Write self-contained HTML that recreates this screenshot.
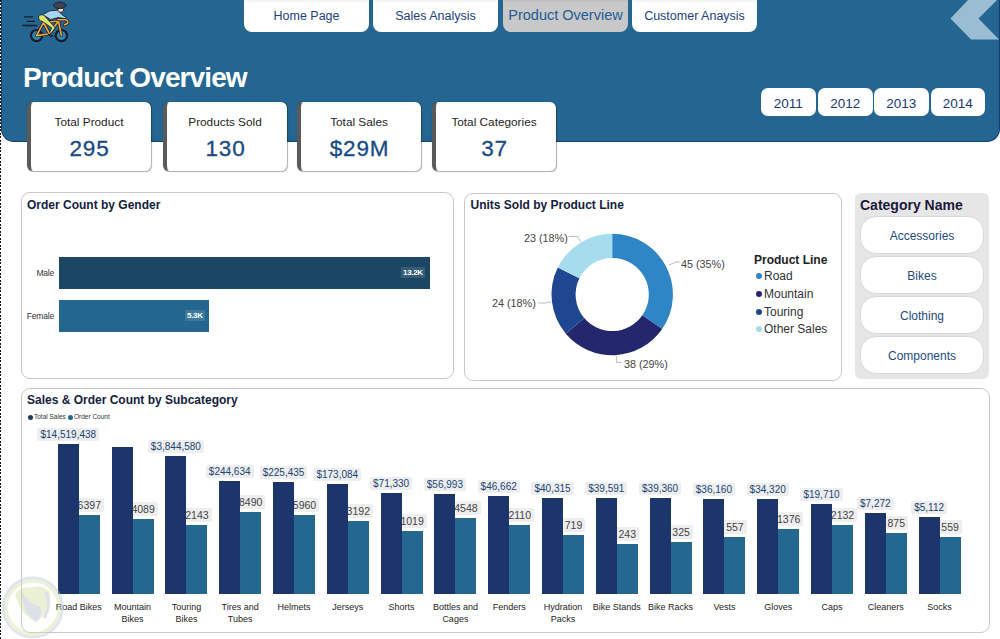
<!DOCTYPE html><html><head><meta charset="utf-8"><style>
*{margin:0;padding:0;box-sizing:border-box}
html,body{width:1000px;height:639px;overflow:hidden;background:#fff;font-family:"Liberation Sans", sans-serif}
.a{position:absolute}
.t{position:absolute;white-space:nowrap;line-height:1}
</style></head><body>
<div class="a" style="left:2px;top:-20px;width:997px;height:161px;background:#246691;border-radius:0 0 12px 12px;box-shadow:0 0 0 1px #153e70"></div>
<div class="a" style="left:244px;top:-10px;width:125px;height:42px;background:#fff;border-radius:8px;font-size:12.5px;color:#1c417e;display:flex;align-items:flex-end;justify-content:center;padding-bottom:10px;line-height:1">Home Page</div>
<div class="a" style="left:245px;top:0;width:123px;height:1.5px;background:rgba(0,0,0,.04)"></div>
<div class="a" style="left:373px;top:-10px;width:125px;height:42px;background:#fff;border-radius:8px;font-size:12.5px;color:#1c417e;display:flex;align-items:flex-end;justify-content:center;padding-bottom:10px;line-height:1">Sales Analysis</div>
<div class="a" style="left:374px;top:0;width:123px;height:1.5px;background:rgba(0,0,0,.04)"></div>
<div class="a" style="left:503px;top:-10px;width:125px;height:42px;background:#c8c8c8;border-radius:8px;font-size:14.5px;color:#235c96;display:flex;align-items:flex-end;justify-content:center;padding-bottom:10px;line-height:1">Product Overview</div>
<div class="a" style="left:504px;top:0;width:123px;height:1.5px;background:rgba(0,0,0,.04)"></div>
<div class="a" style="left:632px;top:-10px;width:125px;height:42px;background:#fff;border-radius:8px;font-size:12.5px;color:#1c417e;display:flex;align-items:flex-end;justify-content:center;padding-bottom:10px;line-height:1">Customer Anaysis</div>
<div class="a" style="left:633px;top:0;width:123px;height:1.5px;background:rgba(0,0,0,.04)"></div>
<svg class="a" style="left:18px;top:0" width="60" height="48" viewBox="0 0 60 48">
<g stroke="#1b1b26" stroke-linecap="round" stroke-linejoin="round">
<path d="M6.4,16.9H14.6M9.4,21.4H16.1M4.9,25.5H18.8" stroke-width="1.3" fill="none"/>
<circle cx="18.6" cy="35.6" r="5.6" fill="#2a86b8" stroke-width="2.2"/>
<circle cx="43.4" cy="35.6" r="5.6" fill="#2a86b8" stroke-width="2.2"/>
<path d="M18.6,35.6L25.5,22.5L40.5,21L43.4,35.6M25.5,22.5L31.5,33.8L40.5,21M18.6,35.6L31.5,33.8" fill="none" stroke="#1b1b26" stroke-width="3"/>
<path d="M18.6,35.6L25.5,22.5L40.5,21L43.4,35.6M25.5,22.5L31.5,33.8L40.5,21M18.6,35.6L31.5,33.8" fill="none" stroke="#f2a93b" stroke-width="1.6"/>
<path d="M40,19.8H47.5Q50.5,20.3 49.5,23.5L46.5,24.8" fill="none" stroke="#1b1b26" stroke-width="3"/>
<path d="M40,19.8H47.5Q50.5,20.3 49.5,23.5L46.5,24.8" fill="none" stroke="#f2a93b" stroke-width="1.6"/>
<path d="M25,14.5L32,10.8L40,10.2L44,14.8L48,17.2L47.5,18.6L40,17.6L33,19.5Z" fill="#a8d6f2" stroke-width="0.8"/>
<path d="M20.5,16.5Q21.5,14.2 25.5,14.8L37.2,27.8L33,33.5L31.6,32.5L33.6,27.8L24.5,21.5Q20,20.5 20.5,16.5Z" fill="#dce56a" stroke-width="0.8"/>
<path d="M30,34L33,37L35,36Z" fill="#3d4350" stroke-width="0.8"/>
<ellipse cx="42.8" cy="10" rx="3" ry="2.2" fill="#f4e6de" stroke-width="0.8"/>
<ellipse cx="41.8" cy="5.4" rx="6.2" ry="3.2" fill="#3d4350" stroke-width="0.8"/>
</g></svg>
<svg class="a" style="left:940px;top:0" width="60" height="42" viewBox="0 0 60 42"><polygon points="28,0 57,0 38.5,18.5 59,39.5 31,39.5 10.5,18.5" fill="#9bbdd3"/></svg>
<div class="t" style="left:23px;top:64px;font-size:28px;font-weight:bold;color:#fff;letter-spacing:-0.9px">Product Overview</div>
<div class="a" style="left:761px;top:87.5px;width:54.5px;height:28px;background:#fff;border-radius:7px;font-size:13.5px;color:#1a3a75;display:flex;align-items:center;justify-content:center;padding-top:3px">2011</div>
<div class="a" style="left:818px;top:87.5px;width:54.5px;height:28px;background:#fff;border-radius:7px;font-size:13.5px;color:#1a3a75;display:flex;align-items:center;justify-content:center;padding-top:3px">2012</div>
<div class="a" style="left:874px;top:87.5px;width:54.5px;height:28px;background:#fff;border-radius:7px;font-size:13.5px;color:#1a3a75;display:flex;align-items:center;justify-content:center;padding-top:3px">2013</div>
<div class="a" style="left:930.5px;top:87.5px;width:54.5px;height:28px;background:#fff;border-radius:7px;font-size:13.5px;color:#1a3a75;display:flex;align-items:center;justify-content:center;padding-top:3px">2014</div>
<div class="a" style="left:27px;top:102px;width:124px;height:69px;background:#fff;border-radius:6px;border-left:4.5px solid #5a5a5a;box-shadow:0.5px 0.5px 1px rgba(0,0,0,.32)"><div class="t" style="left:-4px;right:0;top:15px;text-align:center;font-size:11.8px;color:#252423">Total Product</div><div class="t" style="left:-3px;right:0;top:36px;text-align:center;font-size:22.5px;letter-spacing:0.8px;color:#184a85;-webkit-text-stroke:0.3px #184a85">295</div></div>
<div class="a" style="left:163px;top:102px;width:124px;height:69px;background:#fff;border-radius:6px;border-left:4.5px solid #5a5a5a;box-shadow:0.5px 0.5px 1px rgba(0,0,0,.32)"><div class="t" style="left:-4px;right:0;top:15px;text-align:center;font-size:11.8px;color:#252423">Products Sold</div><div class="t" style="left:-3px;right:0;top:36px;text-align:center;font-size:22.5px;letter-spacing:0.8px;color:#184a85;-webkit-text-stroke:0.3px #184a85">130</div></div>
<div class="a" style="left:297px;top:102px;width:124px;height:69px;background:#fff;border-radius:6px;border-left:4.5px solid #5a5a5a;box-shadow:0.5px 0.5px 1px rgba(0,0,0,.32)"><div class="t" style="left:-4px;right:0;top:15px;text-align:center;font-size:11.8px;color:#252423">Total Sales</div><div class="t" style="left:-3px;right:0;top:36px;text-align:center;font-size:22.5px;letter-spacing:0.8px;color:#184a85;-webkit-text-stroke:0.3px #184a85">$29M</div></div>
<div class="a" style="left:432px;top:102px;width:124px;height:69px;background:#fff;border-radius:6px;border-left:4.5px solid #5a5a5a;box-shadow:0.5px 0.5px 1px rgba(0,0,0,.32)"><div class="t" style="left:-4px;right:0;top:15px;text-align:center;font-size:11.8px;color:#252423">Total Categories</div><div class="t" style="left:-3px;right:0;top:36px;text-align:center;font-size:22.5px;letter-spacing:0.8px;color:#184a85;-webkit-text-stroke:0.3px #184a85">37</div></div>
<div class="a" style="left:20.6px;top:192.3px;width:433.4px;height:187px;border:1px solid #c8c8c8;border-radius:9px;background:#fff"></div>
<div class="a" style="left:464px;top:193px;width:378px;height:187.8px;border:1px solid #c8c8c8;border-radius:9px;background:#fff"></div>
<div class="a" style="left:20.6px;top:388.3px;width:969.2px;height:244.6px;border:1px solid #c8c8c8;border-radius:9px;background:#fff"></div>
<div class="t" style="left:27px;top:198.5px;font-size:12px;font-weight:bold;color:#14213d">Order Count by Gender</div>
<div class="a" style="left:59px;top:257px;width:371px;height:32px;background:#1b4664"></div>
<div class="a" style="left:59px;top:300px;width:150px;height:32px;background:#236690"></div>
<div class="t" style="left:14px;width:40px;text-align:right;top:269px;font-size:8.5px;letter-spacing:-0.2px;color:#333">Male</div>
<div class="t" style="left:14px;width:40px;text-align:right;top:312px;font-size:8.5px;letter-spacing:-0.2px;color:#333">Female</div>
<div class="t" style="left:401px;top:267px;padding:2px 2px 1px;font-size:8px;font-weight:bold;letter-spacing:-0.3px;color:#fff;background:rgba(255,255,255,.12)">13.2K</div>
<div class="t" style="left:185px;top:310px;padding:2px 2px 1px;font-size:8px;font-weight:bold;letter-spacing:-0.3px;color:#fff;background:rgba(255,255,255,.12)">5.3K</div>
<div class="t" style="left:470.5px;top:198.8px;font-size:12px;font-weight:bold;color:#14213d">Units Sold by Product Line</div>
<svg class="a" style="left:0;top:0" width="1000" height="639"><path d="M612.20,233.80 A60.7,60.7 0 0 1 662.16,328.98 L642.32,315.29 A36.6,36.6 0 0 0 612.20,257.90 Z" fill="#2f86c6"/><path d="M662.16,328.98 A60.7,60.7 0 0 1 565.81,333.64 L584.23,318.10 A36.6,36.6 0 0 0 642.32,315.29 Z" fill="#25276e"/><path d="M565.81,333.64 A60.7,60.7 0 0 1 557.79,267.60 L579.39,278.28 A36.6,36.6 0 0 0 584.23,318.10 Z" fill="#1f4791"/><path d="M557.79,267.60 A60.7,60.7 0 0 1 612.20,233.80 L612.20,257.90 A36.6,36.6 0 0 0 579.39,278.28 Z" fill="#a5dcee"/><polyline points="669,265 676,262 680,262" fill="none" stroke="#bbb" stroke-width="1"/><polyline points="616.4,356 616.4,362.5 621.5,362.5" fill="none" stroke="#bbb" stroke-width="1"/><polyline points="551,302 545,303 538,303" fill="none" stroke="#bbb" stroke-width="1"/><polyline points="580.5,241.5 577.6,236.5 568.5,236.5" fill="none" stroke="#bbb" stroke-width="1"/></svg>
<div class="t" style="left:681px;top:258.5px;font-size:10.8px;color:#444">45 (35%)</div>
<div class="t" style="left:624px;top:358.5px;font-size:10.8px;color:#444">38 (29%)</div>
<div class="t" style="left:492px;top:298px;font-size:10.8px;color:#444">24 (18%)</div>
<div class="t" style="left:524px;top:233px;font-size:10.8px;color:#444">23 (18%)</div>
<div class="t" style="left:754px;top:254px;font-size:12px;font-weight:bold;color:#222">Product Line</div>
<div class="a" style="left:756px;top:273px;width:6px;height:6px;border-radius:50%;background:#2f86c6"></div>
<div class="t" style="left:764px;top:270px;font-size:12px;color:#333">Road</div>
<div class="a" style="left:756px;top:291px;width:6px;height:6px;border-radius:50%;background:#25276e"></div>
<div class="t" style="left:764px;top:288px;font-size:12px;color:#333">Mountain</div>
<div class="a" style="left:756px;top:309px;width:6px;height:6px;border-radius:50%;background:#1f4791"></div>
<div class="t" style="left:764px;top:306px;font-size:12px;color:#333">Touring</div>
<div class="a" style="left:756px;top:326px;width:6px;height:6px;border-radius:50%;background:#a5dcee"></div>
<div class="t" style="left:764px;top:323px;font-size:12px;color:#333">Other Sales</div>
<div class="a" style="left:855px;top:193px;width:134px;height:186px;background:#e6e6e6;border-radius:6px"></div>
<div class="t" style="left:860px;top:198px;font-size:14px;font-weight:bold;color:#1a1a3a">Category Name</div>
<div class="a" style="left:860px;top:216px;width:124px;height:37.5px;background:#fff;border:1px solid #d8d8d8;border-radius:16px;display:flex;align-items:center;justify-content:center;font-size:12px;color:#1c4a82;padding-top:2px">Accessories</div>
<div class="a" style="left:860px;top:256px;width:124px;height:37.5px;background:#fff;border:1px solid #d8d8d8;border-radius:16px;display:flex;align-items:center;justify-content:center;font-size:12px;color:#1c4a82;padding-top:2px">Bikes</div>
<div class="a" style="left:860px;top:296.2px;width:124px;height:37.5px;background:#fff;border:1px solid #d8d8d8;border-radius:16px;display:flex;align-items:center;justify-content:center;font-size:12px;color:#1c4a82;padding-top:2px">Clothing</div>
<div class="a" style="left:860px;top:336.2px;width:124px;height:37.5px;background:#fff;border:1px solid #d8d8d8;border-radius:16px;display:flex;align-items:center;justify-content:center;font-size:12px;color:#1c4a82;padding-top:2px">Components</div>
<div class="t" style="left:27px;top:394px;font-size:12px;font-weight:bold;color:#14213d">Sales &amp; Order Count by Subcategory</div>
<div class="a" style="left:28px;top:415px;width:5px;height:5px;border-radius:50%;background:#1c356a"></div>
<div class="t" style="left:34px;top:413.5px;font-size:6.5px;color:#333">Total Sales</div>
<div class="a" style="left:68px;top:415px;width:5px;height:5px;border-radius:50%;background:#246891"></div>
<div class="t" style="left:74px;top:413.5px;font-size:6.5px;color:#333">Order Count</div>
<div class="t" style="left:28.3px;width:80px;top:425.0px;text-align:center"><span style="background:#eee;padding:1px 3px;font-size:10px;color:#174577;border-radius:2px">$14,519,438</span></div>
<div class="t" style="left:59.3px;width:60px;top:495.7px;text-align:center"><span style="background:#eee;padding:1px 3px;font-size:10.5px;color:#444;border-radius:2px">6397</span></div>
<div class="t" style="left:113.1px;width:60px;top:499.6px;text-align:center"><span style="background:#eee;padding:1px 3px;font-size:10.5px;color:#444;border-radius:2px">4089</span></div>
<div class="t" style="left:135.9px;width:80px;top:436.8px;text-align:center"><span style="background:#eee;padding:1px 3px;font-size:10px;color:#174577;border-radius:2px">$3,844,580</span></div>
<div class="t" style="left:166.9px;width:60px;top:505.7px;text-align:center"><span style="background:#eee;padding:1px 3px;font-size:10.5px;color:#444;border-radius:2px">2143</span></div>
<div class="t" style="left:189.7px;width:80px;top:462.3px;text-align:center"><span style="background:#eee;padding:1px 3px;font-size:10px;color:#174577;border-radius:2px">$244,634</span></div>
<div class="t" style="left:220.7px;width:60px;top:492.7px;text-align:center"><span style="background:#eee;padding:1px 3px;font-size:10.5px;color:#444;border-radius:2px">8490</span></div>
<div class="t" style="left:243.5px;width:80px;top:463.0px;text-align:center"><span style="background:#eee;padding:1px 3px;font-size:10px;color:#174577;border-radius:2px">$225,435</span></div>
<div class="t" style="left:274.5px;width:60px;top:496.0px;text-align:center"><span style="background:#eee;padding:1px 3px;font-size:10.5px;color:#444;border-radius:2px">5960</span></div>
<div class="t" style="left:297.3px;width:80px;top:465.3px;text-align:center"><span style="background:#eee;padding:1px 3px;font-size:10px;color:#174577;border-radius:2px">$173,084</span></div>
<div class="t" style="left:328.3px;width:60px;top:502.0px;text-align:center"><span style="background:#eee;padding:1px 3px;font-size:10.5px;color:#444;border-radius:2px">3192</span></div>
<div class="t" style="left:351.1px;width:80px;top:473.7px;text-align:center"><span style="background:#eee;padding:1px 3px;font-size:10px;color:#174577;border-radius:2px">$71,330</span></div>
<div class="t" style="left:382.1px;width:60px;top:512.0px;text-align:center"><span style="background:#eee;padding:1px 3px;font-size:10.5px;color:#444;border-radius:2px">1019</span></div>
<div class="t" style="left:404.9px;width:80px;top:475.4px;text-align:center"><span style="background:#eee;padding:1px 3px;font-size:10px;color:#174577;border-radius:2px">$56,993</span></div>
<div class="t" style="left:435.9px;width:60px;top:498.5px;text-align:center"><span style="background:#eee;padding:1px 3px;font-size:10.5px;color:#444;border-radius:2px">4548</span></div>
<div class="t" style="left:458.7px;width:80px;top:477.0px;text-align:center"><span style="background:#eee;padding:1px 3px;font-size:10px;color:#174577;border-radius:2px">$46,662</span></div>
<div class="t" style="left:489.7px;width:60px;top:505.7px;text-align:center"><span style="background:#eee;padding:1px 3px;font-size:10.5px;color:#444;border-radius:2px">2110</span></div>
<div class="t" style="left:512.5px;width:80px;top:478.8px;text-align:center"><span style="background:#eee;padding:1px 3px;font-size:10px;color:#174577;border-radius:2px">$40,315</span></div>
<div class="t" style="left:543.5px;width:60px;top:515.5px;text-align:center"><span style="background:#eee;padding:1px 3px;font-size:10.5px;color:#444;border-radius:2px">719</span></div>
<div class="t" style="left:566.3px;width:80px;top:478.8px;text-align:center"><span style="background:#eee;padding:1px 3px;font-size:10px;color:#174577;border-radius:2px">$39,591</span></div>
<div class="t" style="left:597.3px;width:60px;top:525.4px;text-align:center"><span style="background:#eee;padding:1px 3px;font-size:10.5px;color:#444;border-radius:2px">243</span></div>
<div class="t" style="left:620.1px;width:80px;top:478.8px;text-align:center"><span style="background:#eee;padding:1px 3px;font-size:10px;color:#174577;border-radius:2px">$39,360</span></div>
<div class="t" style="left:651.1px;width:60px;top:523.0px;text-align:center"><span style="background:#eee;padding:1px 3px;font-size:10.5px;color:#444;border-radius:2px">325</span></div>
<div class="t" style="left:673.9px;width:80px;top:479.8px;text-align:center"><span style="background:#eee;padding:1px 3px;font-size:10px;color:#174577;border-radius:2px">$36,160</span></div>
<div class="t" style="left:704.9px;width:60px;top:517.9px;text-align:center"><span style="background:#eee;padding:1px 3px;font-size:10.5px;color:#444;border-radius:2px">557</span></div>
<div class="t" style="left:727.7px;width:80px;top:479.8px;text-align:center"><span style="background:#eee;padding:1px 3px;font-size:10px;color:#174577;border-radius:2px">$34,320</span></div>
<div class="t" style="left:758.7px;width:60px;top:510.0px;text-align:center"><span style="background:#eee;padding:1px 3px;font-size:10.5px;color:#444;border-radius:2px">1376</span></div>
<div class="t" style="left:781.5px;width:80px;top:485.0px;text-align:center"><span style="background:#eee;padding:1px 3px;font-size:10px;color:#174577;border-radius:2px">$19,710</span></div>
<div class="t" style="left:812.5px;width:60px;top:505.7px;text-align:center"><span style="background:#eee;padding:1px 3px;font-size:10.5px;color:#444;border-radius:2px">2132</span></div>
<div class="t" style="left:835.3px;width:80px;top:494.1px;text-align:center"><span style="background:#eee;padding:1px 3px;font-size:10px;color:#174577;border-radius:2px">$7,272</span></div>
<div class="t" style="left:866.3px;width:60px;top:513.8px;text-align:center"><span style="background:#eee;padding:1px 3px;font-size:10.5px;color:#444;border-radius:2px">875</span></div>
<div class="t" style="left:889.1px;width:80px;top:497.5px;text-align:center"><span style="background:#eee;padding:1px 3px;font-size:10px;color:#174577;border-radius:2px">$5,112</span></div>
<div class="t" style="left:920.1px;width:60px;top:517.9px;text-align:center"><span style="background:#eee;padding:1px 3px;font-size:10.5px;color:#444;border-radius:2px">559</span></div>
<div class="a" style="left:57.8px;top:444px;width:21px;height:150.0px;background:#1c356a"></div>
<div class="a" style="left:78.8px;top:514.7px;width:21px;height:79.3px;background:#246891"></div>
<div class="t" style="left:38.8px;width:80px;top:603px;text-align:center;font-size:9px;color:#252423">Road Bikes</div>
<div class="a" style="left:111.6px;top:447.3px;width:21px;height:146.7px;background:#1c356a"></div>
<div class="a" style="left:132.6px;top:518.6px;width:21px;height:75.4px;background:#246891"></div>
<div class="t" style="left:92.6px;width:80px;top:603px;text-align:center;font-size:9px;color:#252423">Mountain</div>
<div class="t" style="left:92.6px;width:80px;top:615px;text-align:center;font-size:9px;color:#252423">Bikes</div>
<div class="a" style="left:165.4px;top:455.8px;width:21px;height:138.2px;background:#1c356a"></div>
<div class="a" style="left:186.4px;top:524.7px;width:21px;height:69.3px;background:#246891"></div>
<div class="t" style="left:146.4px;width:80px;top:603px;text-align:center;font-size:9px;color:#252423">Touring</div>
<div class="t" style="left:146.4px;width:80px;top:615px;text-align:center;font-size:9px;color:#252423">Bikes</div>
<div class="a" style="left:219.2px;top:481.3px;width:21px;height:112.7px;background:#1c356a"></div>
<div class="a" style="left:240.2px;top:511.7px;width:21px;height:82.3px;background:#246891"></div>
<div class="t" style="left:200.2px;width:80px;top:603px;text-align:center;font-size:9px;color:#252423">Tires and</div>
<div class="t" style="left:200.2px;width:80px;top:615px;text-align:center;font-size:9px;color:#252423">Tubes</div>
<div class="a" style="left:273.0px;top:482px;width:21px;height:112.0px;background:#1c356a"></div>
<div class="a" style="left:294.0px;top:515px;width:21px;height:79.0px;background:#246891"></div>
<div class="t" style="left:254.0px;width:80px;top:603px;text-align:center;font-size:9px;color:#252423">Helmets</div>
<div class="a" style="left:326.8px;top:484.3px;width:21px;height:109.7px;background:#1c356a"></div>
<div class="a" style="left:347.8px;top:521px;width:21px;height:73.0px;background:#246891"></div>
<div class="t" style="left:307.8px;width:80px;top:603px;text-align:center;font-size:9px;color:#252423">Jerseys</div>
<div class="a" style="left:380.6px;top:492.7px;width:21px;height:101.3px;background:#1c356a"></div>
<div class="a" style="left:401.6px;top:531px;width:21px;height:63.0px;background:#246891"></div>
<div class="t" style="left:361.6px;width:80px;top:603px;text-align:center;font-size:9px;color:#252423">Shorts</div>
<div class="a" style="left:434.4px;top:494.4px;width:21px;height:99.6px;background:#1c356a"></div>
<div class="a" style="left:455.4px;top:517.5px;width:21px;height:76.5px;background:#246891"></div>
<div class="t" style="left:415.4px;width:80px;top:603px;text-align:center;font-size:9px;color:#252423">Bottles and</div>
<div class="t" style="left:415.4px;width:80px;top:615px;text-align:center;font-size:9px;color:#252423">Cages</div>
<div class="a" style="left:488.2px;top:496px;width:21px;height:98.0px;background:#1c356a"></div>
<div class="a" style="left:509.2px;top:524.7px;width:21px;height:69.3px;background:#246891"></div>
<div class="t" style="left:469.2px;width:80px;top:603px;text-align:center;font-size:9px;color:#252423">Fenders</div>
<div class="a" style="left:542.0px;top:497.8px;width:21px;height:96.2px;background:#1c356a"></div>
<div class="a" style="left:563.0px;top:534.5px;width:21px;height:59.5px;background:#246891"></div>
<div class="t" style="left:523.0px;width:80px;top:603px;text-align:center;font-size:9px;color:#252423">Hydration</div>
<div class="t" style="left:523.0px;width:80px;top:615px;text-align:center;font-size:9px;color:#252423">Packs</div>
<div class="a" style="left:595.8px;top:497.8px;width:21px;height:96.2px;background:#1c356a"></div>
<div class="a" style="left:616.8px;top:544.4px;width:21px;height:49.6px;background:#246891"></div>
<div class="t" style="left:576.8px;width:80px;top:603px;text-align:center;font-size:9px;color:#252423">Bike Stands</div>
<div class="a" style="left:649.6px;top:497.8px;width:21px;height:96.2px;background:#1c356a"></div>
<div class="a" style="left:670.6px;top:542px;width:21px;height:52.0px;background:#246891"></div>
<div class="t" style="left:630.6px;width:80px;top:603px;text-align:center;font-size:9px;color:#252423">Bike Racks</div>
<div class="a" style="left:703.4px;top:498.8px;width:21px;height:95.2px;background:#1c356a"></div>
<div class="a" style="left:724.4px;top:536.9px;width:21px;height:57.1px;background:#246891"></div>
<div class="t" style="left:684.4px;width:80px;top:603px;text-align:center;font-size:9px;color:#252423">Vests</div>
<div class="a" style="left:757.2px;top:498.8px;width:21px;height:95.2px;background:#1c356a"></div>
<div class="a" style="left:778.2px;top:529px;width:21px;height:65.0px;background:#246891"></div>
<div class="t" style="left:738.2px;width:80px;top:603px;text-align:center;font-size:9px;color:#252423">Gloves</div>
<div class="a" style="left:811.0px;top:504px;width:21px;height:90.0px;background:#1c356a"></div>
<div class="a" style="left:832.0px;top:524.7px;width:21px;height:69.3px;background:#246891"></div>
<div class="t" style="left:792.0px;width:80px;top:603px;text-align:center;font-size:9px;color:#252423">Caps</div>
<div class="a" style="left:864.8px;top:513.1px;width:21px;height:80.9px;background:#1c356a"></div>
<div class="a" style="left:885.8px;top:532.8px;width:21px;height:61.2px;background:#246891"></div>
<div class="t" style="left:845.8px;width:80px;top:603px;text-align:center;font-size:9px;color:#252423">Cleaners</div>
<div class="a" style="left:918.6px;top:516.5px;width:21px;height:77.5px;background:#1c356a"></div>
<div class="a" style="left:939.6px;top:536.9px;width:21px;height:57.1px;background:#246891"></div>
<div class="t" style="left:899.6px;width:80px;top:603px;text-align:center;font-size:9px;color:#252423">Socks</div>
<svg class="a" style="left:0;top:570px;opacity:.45" width="70" height="69" viewBox="0 570 70 69">
<circle cx="32.8" cy="607.6" r="29.5" fill="none" stroke="#b9c9da" stroke-width="3"/>
<circle cx="32.8" cy="607.6" r="26.5" fill="none" stroke="#d3e4a6" stroke-width="3"/>
<path d="M15,593Q25,585 30,588Q40,583 50,592Q52,610 36,622Q20,615 15,593Z" fill="#d3e2a4"/>
<path d="M21,591Q30,605 40,606Q44,615 36,622Q22,612 21,591Z" fill="#b4c1cf"/>
<path d="M46,592Q52,605 44,618" fill="none" stroke="#b4c1cf" stroke-width="3"/>
</svg>
<div class="a" style="left:0;top:0;width:1px;height:639px;background:repeating-linear-gradient(#111 0 2px,#fff 2px 3.5px)"></div>
</body></html>
